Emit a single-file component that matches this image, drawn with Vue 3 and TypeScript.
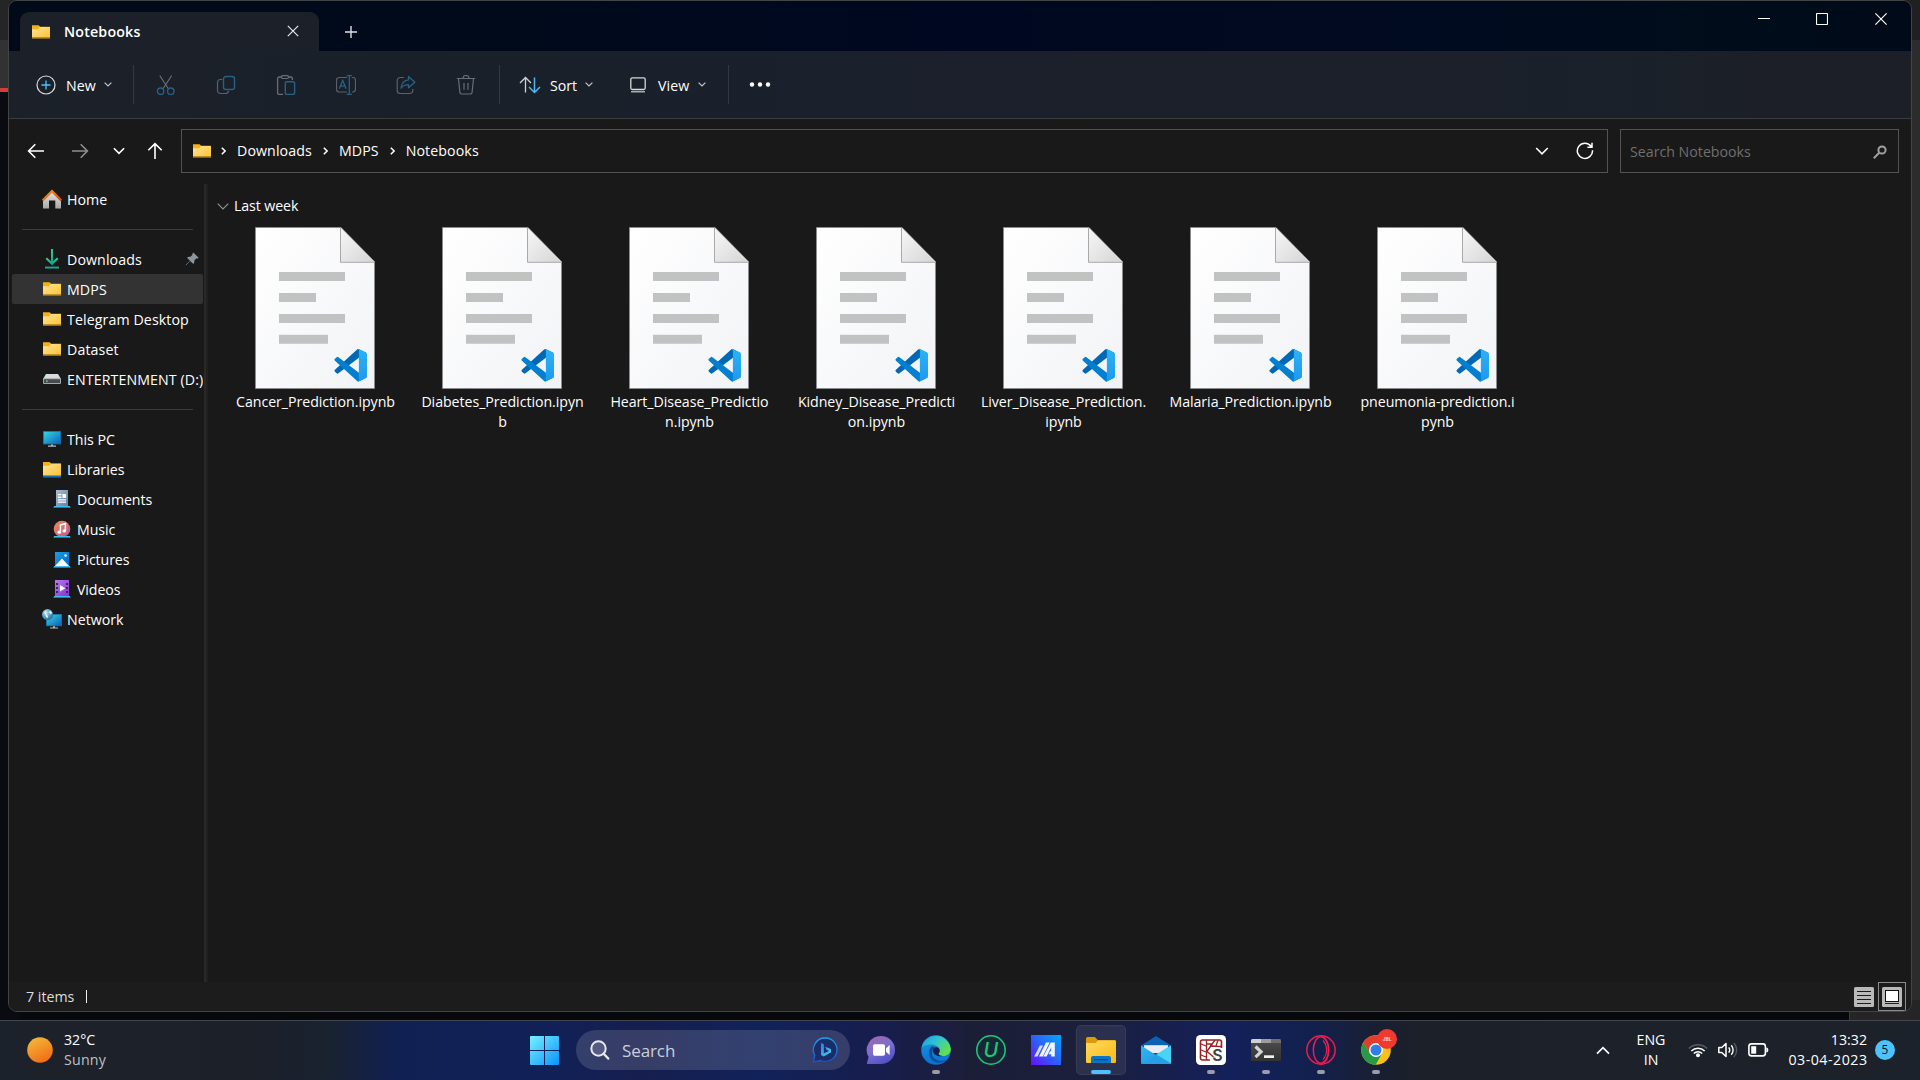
<script setup lang="ts">
interface NavItem {
  label: string
  icon: string
  nested?: boolean
  active?: boolean
  pinned?: boolean
}

const navGroups: NavItem[][] = [
  [{ label: 'Home', icon: 'home' }],
  [
    { label: 'Downloads', icon: 'download', pinned: true },
    { label: 'MDPS', icon: 'folder', active: true },
    { label: 'Telegram Desktop', icon: 'folder' },
    { label: 'Dataset', icon: 'folder' },
    { label: 'ENTERTENMENT (D:)', icon: 'drive' },
  ],
  [
    { label: 'This PC', icon: 'pc' },
    { label: 'Libraries', icon: 'library' },
    { label: 'Documents', icon: 'documents', nested: true },
    { label: 'Music', icon: 'music', nested: true },
    { label: 'Pictures', icon: 'pictures', nested: true },
    { label: 'Videos', icon: 'videos', nested: true },
    { label: 'Network', icon: 'network' },
  ],
]

const files: string[][] = [
  ['Cancer_Prediction.ipynb'],
  ['Diabetes_Prediction.ipyn', 'b'],
  ['Heart_Disease_Predictio', 'n.ipynb'],
  ['Kidney_Disease_Predicti', 'on.ipynb'],
  ['Liver_Disease_Prediction.', 'ipynb'],
  ['Malaria_Prediction.ipynb'],
  ['pneumonia-prediction.i', 'pynb'],
]

const crumbs: string[] = ['Downloads', 'MDPS', 'Notebooks']
const disabledTools: string[] = ['cut', 'copy', 'paste', 'rename', 'share', 'trash']

interface TaskApp {
  icon: string
  state: '' | 'running' | 'active'
  glyph?: string
}
const apps: TaskApp[] = [
  { icon: 'chat', state: '' },
  { icon: 'edge', state: 'running' },
  { icon: 'uninstaller', state: '', glyph: 'U' },
  { icon: 'myasus', state: '' },
  { icon: 'explorer', state: 'active' },
  { icon: 'mail', state: '' },
  { icon: 'ks', state: 'running', glyph: 'S' },
  { icon: 'terminal', state: 'running' },
  { icon: 'opera', state: 'running' },
  { icon: 'chrome', state: 'running', glyph: 'JBL' },
]
</script>

<template>
  <svg class="defs" width="0" height="0" aria-hidden="true">
    <defs>
      <linearGradient id="gFolder" x1="0" y1="0" x2="1" y2="1"><stop offset="0" stop-color="#ffe59b" /><stop offset="1" stop-color="#fdc232" /></linearGradient>
      <linearGradient id="gHome" x1="0" y1="0" x2="0" y2="1"><stop offset="0" stop-color="#e6e6e6" /><stop offset="1" stop-color="#a8a8a8" /></linearGradient>
      <linearGradient id="gRoof" x1="0" y1="0" x2="1" y2="1"><stop offset="0" stop-color="#f9a01b" /><stop offset="1" stop-color="#c8470f" /></linearGradient>
      <linearGradient id="gDown" x1="0" y1="0" x2="0" y2="1"><stop offset="0" stop-color="#3bd07f" /><stop offset="1" stop-color="#0ea5a0" /></linearGradient>
      <linearGradient id="gPc" x1="0" y1="0" x2="1" y2="1"><stop offset="0" stop-color="#35d6e6" /><stop offset="1" stop-color="#0b63b8" /></linearGradient>
      <linearGradient id="gDoc" x1="0" y1="0" x2="1" y2="1"><stop offset="0" stop-color="#a9bdd2" /><stop offset="1" stop-color="#5f7fa3" /></linearGradient>
      <linearGradient id="gMusic" x1="0" y1="0" x2="1" y2="1"><stop offset="0" stop-color="#f58a51" /><stop offset="1" stop-color="#b05a9c" /></linearGradient>
      <linearGradient id="gPic" x1="0" y1="0" x2="1" y2="1"><stop offset="0" stop-color="#1d9de6" /><stop offset="1" stop-color="#0866ba" /></linearGradient>
      <linearGradient id="gVid" x1="0" y1="0" x2="1" y2="1"><stop offset="0" stop-color="#b57bf0" /><stop offset="1" stop-color="#8233cf" /></linearGradient>
      <radialGradient id="gGlobe" cx=".35" cy=".3" r=".8"><stop offset="0" stop-color="#bfe4f2" /><stop offset=".6" stop-color="#4b95bd" /><stop offset="1" stop-color="#275f86" /></radialGradient>
      <linearGradient id="gPage" x1="0" y1="0" x2="1" y2="1"><stop offset="0" stop-color="#ffffff" /><stop offset="1" stop-color="#f2f3f6" /></linearGradient>
      <linearGradient id="gFold" x1="0" y1="0" x2="1" y2="1"><stop offset="0" stop-color="#f7f7f7" /><stop offset="1" stop-color="#d5d5d5" /></linearGradient>
      <linearGradient id="gCode" x1="0" y1="0" x2="0" y2="1"><stop offset="0" stop-color="#2bb3f5" /><stop offset="1" stop-color="#1f98ee" /></linearGradient>
      <linearGradient id="gWin" x1="0" y1="0" x2="1" y2="1"><stop offset="0" stop-color="#77f0ff" /><stop offset="1" stop-color="#0a93fb" /></linearGradient>
      <linearGradient id="gBing" x1="0" y1="0" x2="0" y2="1"><stop offset="0" stop-color="#1ea0e8" /><stop offset="1" stop-color="#2150c8" /></linearGradient>
      <linearGradient id="gBingB" x1="0" y1="0" x2="1" y2="1"><stop offset="0" stop-color="#2e7df0" /><stop offset="1" stop-color="#3fd8e8" /></linearGradient>
      <linearGradient id="gChat" x1=".1" y1="0" x2=".6" y2="1"><stop offset="0" stop-color="#a267a8" /><stop offset=".5" stop-color="#7a6fd0" /><stop offset="1" stop-color="#5350c4" /></linearGradient>
      <linearGradient id="gEdgeTop" x1="0" y1="0" x2="1" y2=".5"><stop offset="0" stop-color="#1a9fe0" /><stop offset=".5" stop-color="#30c3d2" /><stop offset="1" stop-color="#62e04c" /></linearGradient>
      <linearGradient id="gEdge" x1="0" y1="0" x2="0" y2="1"><stop offset="0" stop-color="#1b9be2" /><stop offset="1" stop-color="#0a6fd0" /></linearGradient>
      <linearGradient id="gAsus" x1="0" y1="1" x2="1" y2="0"><stop offset="0" stop-color="#6a0cfb" /><stop offset=".5" stop-color="#2c62fb" /><stop offset="1" stop-color="#00a8fc" /></linearGradient>
      <linearGradient id="gExpl" x1="0" y1="0" x2="1" y2="1"><stop offset="0" stop-color="#ffda62" /><stop offset="1" stop-color="#fab812" /></linearGradient>
      <linearGradient id="gMail" x1="0" y1="0" x2="1" y2="1"><stop offset="0" stop-color="#2fb8f3" /><stop offset="1" stop-color="#1e93dd" /></linearGradient>
      <linearGradient id="gTerm" x1="0" y1="0" x2="0" y2="1"><stop offset="0" stop-color="#4e4e4e" /><stop offset="1" stop-color="#333333" /></linearGradient>
      <linearGradient id="gSun" x1=".2" y1="0" x2=".7" y2="1"><stop offset="0" stop-color="#f3b93c" /><stop offset="1" stop-color="#f26a12" /></linearGradient>
    </defs>
    <symbol id="i-folder" viewBox="0 0 20 20"><path d="M1 3.200h6.600l1.600 1.600H19V9H1z" fill="#f9ae13" /><path d="M1 7.200h6L9 5h10v10.600H1z" fill="url(#gFolder)" /><path d="M1 15.400h18v1.200H1z" fill="#e5a320" /></symbol>
    <symbol id="i-library" viewBox="0 0 20 20"><path d="M1 3h6.600L9.200 4.400H19v5H1z" fill="#f9ae13" /><path d="M1 6.800h6l2-2h10v11.300H1z" fill="url(#gFolder)" /><path d="M1 16h18v1.600H1z" fill="#2bb1ee" /><path d="M1 17.400h18v1.200H1z" fill="#0871bd" /></symbol>
    <symbol id="i-home" viewBox="0 0 20 20"><path d="M1 19.500V10.500l9-8.500L19 10.500v9h-5.700v-8H7v8z" fill="url(#gHome)" /><path d="M.6 11.500 10 2.100l9.400 9.400" fill="none" stroke="url(#gRoof)" stroke-width="2.400" /></symbol>
    <symbol id="i-download" viewBox="0 0 20 20"><path d="M4.300 9.200l5.700 5.600 5.700-5.600" fill="none" stroke="url(#gDown)" stroke-width="2" /><path d="M9 0h2v14H9z" fill="url(#gDown)" /><path d="M3 17.600h14v1.900H3z" fill="#14ab92" /></symbol>
    <symbol id="i-drive" viewBox="0 0 20 20"><path d="M4 5h12l3 5H1z" fill="#d9dcdf" /><rect x="1" y="9.200" width="18" height="5.800" rx="1" fill="#a4a7ab" /><rect x="2" y="10.200" width="16" height="3.800" rx=".6" fill="#484b4e" /><rect x="4" y="11.400" width="1.600" height="1.600" fill="#3fe06a" /></symbol>
    <symbol id="i-pc" viewBox="0 0 20 20"><path d="M1 2h18v13.400H1z" fill="#136b9a" /><path d="M1.800 2.800h16.400v11.800H1.800z" fill="url(#gPc)" /><path d="M9 15.400h2v1.200h3v1.200H6v-1.200h3z" fill="#b5bac0" /></symbol>
    <symbol id="i-documents" viewBox="0 0 20 20"><path d="M4 1h12v16.500H4z" fill="url(#gDoc)" /><path d="M6 5h3.400v1.300H6zM6 7.600h3.400v1.300H6zM10.500 5h3.600v3.900h-3.600zM6 10.200h8v1.300H6zM6 12.500h8v1.200H6z" fill="#fff" /><path d="M2 17.300h16l.9 1.700H1.100z" fill="#0b7ccb" /><path d="M2 17h16v1H2z" fill="#40bdf3" /></symbol>
    <symbol id="i-music" viewBox="0 0 20 20"><circle cx="10" cy="10" r="8.300" fill="url(#gMusic)" /><ellipse cx="7.200" cy="13.200" rx="1.800" ry="1.600" fill="#fff" /><ellipse cx="12.200" cy="11.900" rx="1.800" ry="1.600" fill="#fff" /><path d="M8.400 13.300V6l5-1.400V12" fill="none" stroke="#fff" stroke-width="1.500" /><path d="M2 17.300h16l.9 1.700H1.100z" fill="#0b7ccb" /><path d="M2 17h16v1H2z" fill="#40bdf3" /></symbol>
    <symbol id="i-pictures" viewBox="0 0 20 20"><path d="M3 3h14v14.500H3z" fill="url(#gPic)" /><path d="m3 17 7-7.400L17 17z" fill="#fff" /><circle cx="13.600" cy="6.600" r="1.400" fill="#c9ebff" /><path d="M2 17.300h16l.9 1.700H1.100z" fill="#0b7ccb" /><path d="M2 17h16v1H2z" fill="#40bdf3" /></symbol>
    <symbol id="i-videos" viewBox="0 0 20 20"><path d="M3 1h14v16.500H3z" fill="url(#gVid)" /><path d="M4 4h2v2H4zM4 8h2v2H4zM4 12h2v2H4zM14 4h2v2h-2zM14 8h2v2h-2zM14 12h2v2h-2z" fill="#431a70" /><path d="m8 6 5.400 3.200L8 12.600z" fill="#fff" /><path d="M2 17.300h16l.9 1.700H1.100z" fill="#0b7ccb" /><path d="M2 17h16v1H2z" fill="#40bdf3" /></symbol>
    <symbol id="i-network" viewBox="0 0 20 20"><path d="M4 5h16v12.200H4z" fill="#136b9a" /><path d="M4.800 5.800h14.400v10.600H4.800z" fill="url(#gPc)" /><path d="M11 17.200h2v1.400h3v1H8v-1h3z" fill="#b5bac0" /><circle cx="5.600" cy="5.600" r="5.600" fill="url(#gGlobe)" /><path d="M2 3.600c1.800-2 3-1 2.600.6S7 6.600 5.600 9c-2-.4-1.600-2.900-3.600-5.400zm6-2 2 2-1 2-2-2z" fill="#dff4fb" /></symbol>

    <symbol id="i-cut" viewBox="0 0 20 20"><path d="m3.800.6 8.900 13.700M15.600.6 6.700 14.300" stroke="#686d76" stroke-width="1.100" fill="none" /><g fill="none" stroke="#296184" stroke-width="1.300"><circle cx="4.600" cy="16.200" r="3.200" /><circle cx="14.800" cy="16.200" r="3.200" /></g></symbol>
    <symbol id="i-copy" viewBox="0 0 20 20"><path d="M6.500 4.500H4.300a2.800 2.800 0 0 0-2.800 2.800v8.200a3 3 0 0 0 3 3h5.300a2.800 2.800 0 0 0 2.700-2.600" fill="none" stroke="#5b6069" stroke-width="1.200" /><rect x="7.500" y="1.500" width="11" height="13" rx="2.600" fill="none" stroke="#296184" stroke-width="1.400" /></symbol>
    <symbol id="i-paste" viewBox="0 0 20 20"><path d="M7 19.400H3.200a1.600 1.600 0 0 1-1.600-1.600V3.600A1.600 1.600 0 0 1 3.200 2H6m6 0h2.800a1.600 1.600 0 0 1 1.600 1.600V5" fill="none" stroke="#686d76" stroke-width="1.300" /><rect x="5.500" y=".7" width="7" height="2.800" rx="1.200" fill="none" stroke="#686d76" stroke-width="1.200" /><rect x="9.300" y="6.700" width="9.300" height="12.700" rx="1.600" fill="none" stroke="#296184" stroke-width="1.400" /></symbol>
    <symbol id="i-rename" viewBox="0 0 20 20"><path d="M11 17H3.200A2.700 2.700 0 0 1 .5 14.300V5.200a2.700 2.700 0 0 1 2.700-2.700H11m4.800 0h1a2.700 2.700 0 0 1 2.700 2.700v9.100a2.700 2.700 0 0 1-2.700 2.700h-1" fill="none" stroke="#5b6069" stroke-width="1.200" /><path d="m3.300 13.800 3.400-8.300 3.400 8.300M4.500 11.200h4.500M13.300.6v18.800M10.700.6h5.200M10.700 19.400h5.200" fill="none" stroke="#296184" stroke-width="1.300" /></symbol>
    <symbol id="i-share" viewBox="0 0 20 20"><path d="M8 2.500H4.200a3 3 0 0 0-3 3v10a3 3 0 0 0 3 3h9.600a3 3 0 0 0 3-3V14" fill="none" stroke="#5b6069" stroke-width="1.200" /><path d="M12.500 1.500 18.800 7.300l-6.300 5.500V9.600c-3.500 0-5.600 1-7.500 3.600.6-4.700 3-7.900 7.500-8.300z" fill="none" stroke="#296184" stroke-width="1.300" stroke-linejoin="round" /></symbol>
    <symbol id="i-trash" viewBox="0 0 20 20"><path d="M.8 3.500h18.400M7 3.300a3 2.800 0 0 1 6 0M2.500 3.700l1.400 13.600a2 2 0 0 0 2 1.700h8.200a2 2 0 0 0 2-1.700l1.400-13.600M8 8v6.800M12 8v6.800" fill="none" stroke="#686d76" stroke-width="1.200" /></symbol>

    <symbol id="t-chat" viewBox="0 0 30 30"><path d="M15 1a14 14 0 0 1 0 28H1.500a.6.600 0 0 1-.5-.9L2.600 22A14 14 0 0 1 15 1z" fill="url(#gChat)" /><rect x="7" y="9.300" width="12" height="11.400" rx="1.600" fill="#fff" /><path d="m20 13.400 3.600-3.300v9.800L20 16.700z" fill="#fff" /></symbol>
    <symbol id="t-edge" viewBox="0 0 30 30"><circle cx="15" cy="15" r="14.800" fill="url(#gEdge)" /><path d="M.6 13A14.800 14.800 0 0 1 29.800 14c0 4.600-3.800 7-7.500 7-2.900 0-4.800-.9-4.800-1.900 0-.8 1.300-1.300 1.300-3.600 0-3.500-3.700-6-8-6C5.800 9.500 2 11 .6 13z" fill="url(#gEdgeTop)" /><path d="M10.500 11.500c-3.500 3-3.400 9.500.3 13.200 3.800 3.700 10.400 4.600 15.500-.4-8 4.300-15.700-.9-15.200-6.400.2-2.200 1.700-3.900 3.400-4.600-1.500-1.900-2.800-2.300-4-1.800z" fill="#0c4f9c" /><path d="M12 15.600a3.400 3.400 0 0 1 6.500-1.400c.5 2-.3 3.300-.9 4.300-.5 1 1.200 2.400 4 2.500-5 1.400-9.600-1.400-9.600-5.400z" fill="#171f47" /></symbol>
    <symbol id="t-uninstaller" viewBox="0 0 30 30"><circle cx="15" cy="15" r="14.200" fill="#182937" fill-opacity=".8" stroke="#1fc774" stroke-width="1.600" /></symbol>
    <symbol id="t-myasus" viewBox="0 0 30 30"><path d="M0 0h30v30H0z" fill="url(#gAsus)" /><path d="M8.800 10.500h3.200L6.500 21.500H3.200z" fill="#cfdcff" /><path d="M15 7.500h3.600L11.800 21.500H8z" fill="#eef3ff" /><path d="M19.800 7.500H23.800v14h-3.600v-2.300h-2.600l1.500-3h1.100v-3.700l-4.600 9h-3.300z" fill="#f2f6ff" /></symbol>
    <symbol id="t-explorer" viewBox="0 0 30 30"><path d="M0 3.600A1.600 1.600 0 0 1 1.600 2h7.200l3 3H28.500A1.500 1.500 0 0 1 30 6.500V12H0z" fill="#dc9a08" /><path d="M0 8h9.500l2.700-2.500H29a1 1 0 0 1 1 1v20.300a1.200 1.200 0 0 1-1.200 1.200H1.200A1.200 1.200 0 0 1 0 26.800z" fill="url(#gExpl)" /><path d="M5 28v-5a2 2 0 0 1 2-2h16a2 2 0 0 1 2 2v5z" fill="#0c74c5" /><path d="M8 24.200h14v1H8z" fill="#07437f" /></symbol>
    <symbol id="t-mail" viewBox="0 0 30 30"><path d="M0 10.500 15 1l15 9.500V16H0z" fill="#0b62b4" /><path d="M3 10.200h24v8H3z" fill="#ececf0" /><path d="M0 10.500 15 20l15-9.500V28a1 1 0 0 1-1 1H1a1 1 0 0 1-1-1z" fill="url(#gMail)" /><path d="M30 10.500V28.500L15 19.500z" fill="#48d3f7" /><path d="M30 28.500 15 19.500 2 29h27z" fill="#269fe5" /></symbol>
    <symbol id="t-ks" viewBox="0 0 30 30"><rect width="30" height="30" rx="4.500" fill="#fff" /><g fill="none" stroke="#982226" stroke-width="1.600"><path d="M14 25H6.500a2 2 0 0 1-2-2V7a2 2 0 0 1 2-2h17a2 2 0 0 1 2 2v6" /><path d="M10.500 5v20M10.500 17 19 5M10.500 16l7 6M5 9l5 2M5 15l5 2M5 20l5 2M10.500 9h6M14 11l11 .5M20 11l2-6" stroke-width="1.300" /></g></symbol>
    <symbol id="t-terminal" viewBox="0 0 30 30"><rect y="4" width="30" height="22" rx="1.500" fill="url(#gTerm)" /><path d="M1.500 4H10v4H0V5.500A1.500 1.500 0 0 1 1.500 4z" fill="#d0d0d0" /><path d="M10 4h10v4H10z" fill="#9d9d9d" /><path d="M20 4h8.500A1.500 1.500 0 0 1 30 5.500V8H20z" fill="#6e6e6e" /><path d="m4.500 11.500 5.500 5.300-5.500 5.400" fill="none" stroke="#d4d4d4" stroke-width="3.200" /><path d="M13 20.300h10V23H13z" fill="#f2f2f2" /></symbol>
    <symbol id="t-opera" viewBox="0 0 30 30"><g fill="none" stroke="#ee1c4f"><circle cx="15" cy="15" r="14.200" stroke-width="1.500" /><ellipse cx="15" cy="15" rx="7.700" ry="13.200" stroke-width="1.500" /><path d="M15.500 1.800c9.500 2.500 9.500 23.900 0 26.400M17 5.500c4.800 5 4.800 14 0 19" stroke-width="1.200" /></g></symbol>
    <symbol id="t-chrome" viewBox="0 0 30 30"><circle cx="15" cy="15" r="14.800" fill="#fbc116" /><path d="M15 8.200h12.900A14.800 14.800 0 0 0 2.200 7.600L9.100 18.400z" fill="#e33b2e" /><path d="M2.200 7.600A14.800 14.800 0 0 0 14.700 29.800L21 18.400 9.100 18.400z" fill="#26994a" /><circle cx="15" cy="15" r="7" fill="#fff" /><circle cx="15" cy="15" r="5.500" fill="#2f7de9" /></symbol>
  </svg>

  <div class="desktop">
    <div class="edge left"><i class="e1"></i><i class="e2"></i><i class="e3"></i></div>
    <div class="edge right"><i class="e1"></i></div>
    <div class="gapcorner"></div>

    <section class="window">
      <header class="titlebar">
        <div class="tab">
          <svg class="ic20"><use href="#i-folder" /></svg>
          <span class="tabname">Notebooks</span>
          <svg class="tabclose" width="12" height="12" viewBox="0 0 12 12"><path d="M.8.800l10.400 10.400M11.200.8.800 11.200" /></svg>
        </div>
        <svg class="newtab" width="14" height="14" viewBox="0 0 14 14"><path d="M7 1v12M1 7h12" /></svg>
        <div class="caption">
          <svg class="min" width="12" height="12" viewBox="0 0 12 12"><path d="M0 5.500h12" /></svg>
          <svg width="12" height="12" viewBox="0 0 12 12"><rect x=".5" y=".5" width="11" height="11" rx=".8" /></svg>
          <svg width="12" height="12" viewBox="0 0 12 12"><path d="m.4.400 11.200 11.200M11.600.4.400 11.600" /></svg>
        </div>
      </header>

      <div class="toolbar">
        <div class="cmd new">
          <svg width="20" height="20" viewBox="0 0 20 20"><circle cx="10" cy="10" r="9" fill="none" stroke="#dcdde0" stroke-width="1.200" /><path d="M10 5.500v9M5.500 10h9" stroke="#4cc2ff" stroke-width="1.300" /></svg>
          <span>New</span>
          <svg class="chev" width="8" height="5" viewBox="0 0 8 5"><path d="m.6.600 3.400 3.400L7.400.6" /></svg>
        </div>
        <i class="sep"></i>
        <div class="tools">
          <span v-for="t in disabledTools" :key="t" class="tool"><svg class="ic20"><use :href="'#i-' + t" /></svg></span>
        </div>
        <i class="sep"></i>
        <div class="cmd sort">
          <svg width="22" height="18" viewBox="0 0 22 18"><path d="M6.500 16.500V1.500M1 7l5.500-5.500L12 7" fill="none" stroke="#cfd1d5" stroke-width="1.300" /><path d="M15.500 1.500v15M10 11l5.500 5.500L21 11" fill="none" stroke="#4cb9f5" stroke-width="1.500" /></svg>
          <span>Sort</span>
          <svg class="chev" width="8" height="5" viewBox="0 0 8 5"><path d="m.6.600 3.400 3.400L7.400.6" /></svg>
        </div>
        <div class="cmd view">
          <svg width="16" height="16" viewBox="0 0 16 16"><rect x=".8" y=".8" width="14.400" height="11.700" rx="1.500" fill="none" stroke="#d8d9d6" stroke-width="1.300" /><path d="M1 14.700h14" stroke="#a9aaa8" stroke-width="1.500" /></svg>
          <span>View</span>
          <svg class="chev" width="8" height="5" viewBox="0 0 8 5"><path d="m.6.600 3.400 3.400L7.400.6" /></svg>
        </div>
        <i class="sep"></i>
        <svg class="more" width="22" height="5" viewBox="0 0 22 5"><circle cx="3" cy="2.500" r="2.200" /><circle cx="11" cy="2.500" r="2.200" /><circle cx="19" cy="2.500" r="2.200" /></svg>
      </div>

      <div class="navrow">
        <div class="arrows">
          <svg width="18" height="16" viewBox="0 0 18 16"><path d="M17 8H1.800M8.300 1.300 1.600 8l6.700 6.700" /></svg>
          <svg class="dim" width="18" height="16" viewBox="0 0 18 16"><path d="M1 8h15.200M9.700 1.300 16.400 8l-6.700 6.700" /></svg>
          <svg width="12" height="8" viewBox="0 0 12 8"><path d="m.9 1.200 5.100 5.100 5.100-5.100" /></svg>
          <svg width="16" height="18" viewBox="0 0 16 18"><path d="M8 17V1.800M1.300 8.300 8 1.600l6.700 6.700" /></svg>
        </div>
        <div class="address">
          <svg class="ic20"><use href="#i-folder" /></svg>
          <template v-for="c in crumbs" :key="c">
            <svg class="crumbchev" width="5" height="8" viewBox="0 0 5 8"><path d="m.8.700 3.300 3.300-3.300 3.300" /></svg>
            <span class="crumb">{{ c }}</span>
          </template>
          <svg class="drop" width="14" height="8" viewBox="0 0 14 8"><path d="m1.200 1 5.800 5.800L12.800 1" /></svg>
          <svg class="reload" width="18" height="18" viewBox="0 0 18 18"><path d="M15.200 4.500A7.600 7.600 0 1 0 16.500 8.200M16 .8v4.400h-4.600" /></svg>
        </div>
        <div class="search">
          <span>Search Notebooks</span>
          <svg width="14" height="14" viewBox="0 0 14 14"><circle cx="9" cy="5" r="3.600" stroke-width="2" /><path d="M6.200 7.800.8 13.200" stroke-width="2" /></svg>
        </div>
      </div>

      <div class="body">
        <nav class="sidebar">
          <template v-for="(group, gi) in navGroups" :key="gi">
            <div v-if="gi > 0" class="rule"><i></i></div>
            <div v-for="item in group" :key="item.label" class="navitem" :class="[item.icon, { nested: item.nested, active: item.active }]">
              <svg class="ic20"><use :href="'#i-' + item.icon" /></svg>
              <span>{{ item.label }}</span>
              <svg v-if="item.pinned" class="pin" width="14" height="14" viewBox="0 0 14 14"><path d="M8.300.4 13.600 5.700c-.8 1-1.700 1-2.400.8L9.300 8.500c.3 1.400 0 2.500-1 3.400L5.200 8.900 1.300 13 .6 13.400 1 12.600l4-3.900-3-3c1-1 2.100-1.200 3.500-.9l1.900-2C7.200 2 7.400 1.200 8.300.4z" /></svg>
            </div>
          </template>
        </nav>
        <i class="splitter"></i>
        <main class="content">
          <div class="grouphead">
            <svg width="12" height="7" viewBox="0 0 12 7"><path d="m.7.700 5.300 5.300L11.300.7" /></svg>
            <span>Last week</span>
          </div>
          <div class="files">
            <figure v-for="f in files" :key="f[0]" class="file">
              <svg class="page" width="120" height="162" viewBox="0 0 120 162">
                <path d="M.5.500H86L119.500 34.500V161.500H.5z" fill="url(#gPage)" stroke="#8b8d8f" stroke-width=".8" />
                <path d="M85.500.8V35.200H119.400z" fill="url(#gFold)" />
                <path d="M85.500.8V35.300H119.400" fill="none" stroke="#a9a9a9" stroke-width="1" />
                <path d="M24 45h66v9H24zM24 66h37v9H24zM24 87h66v9H24zM24 107.800h49v9H24z" fill="#c1c3c3" />
                <g transform="translate(79.500 122) scale(.325)">
                  <path d="M96.461 10.796 75.857.876A6.230 6.230 0 0 0 68.750 2.083L1.299 63.583a4.167 4.167 0 0 0 .004 6.162l5.510 5.009a4.167 4.167 0 0 0 5.320.236L93.361 13.370c2.725-2.067 6.639-.124 6.639 3.297v-.24a6.250 6.250 0 0 0-3.539-5.632z" fill="#0068b4" />
                  <path d="M96.461 89.204 75.857 99.124a6.229 6.229 0 0 1-7.107-1.207l-67.451-61.500a4.167 4.167 0 0 1 .004-6.162l5.510-5.009a4.167 4.167 0 0 1 5.320-.236l81.228 61.620c2.725 2.068 6.639.124 6.639-3.297v.24a6.250 6.250 0 0 1-3.539 5.630z" fill="#0280cf" />
                  <path d="M75.858 99.126a6.232 6.232 0 0 1-7.108-1.210c2.306 2.307 6.250.674 6.250-2.588V4.672c0-3.262-3.944-4.895-6.250-2.589a6.232 6.232 0 0 1 7.108-1.210l20.600 9.908A6.250 6.250 0 0 1 100 16.413v67.174a6.250 6.250 0 0 1-3.541 5.633l-20.601 9.906z" fill="url(#gCode)" />
                </g>
              </svg>
              <figcaption><div v-for="line in f" :key="line">{{ line }}</div></figcaption>
            </figure>
          </div>
        </main>
      </div>

      <footer class="status">
        <span>7 items</span><i></i>
        <div class="modes">
          <div class="mode"><svg width="20" height="20" viewBox="0 0 20 20"><rect width="20" height="20" rx="1.500" fill="#b9b9b9" /><path d="M3 4.500h14M3 8.500h14M3 12.500h14M3 16.500h14" stroke="#1a1a1a" /></svg></div>
          <div class="mode on"><svg width="20" height="20" viewBox="0 0 20 20"><rect width="20" height="20" rx="1.500" fill="#b9b9b9" /><rect x="3.500" y="3.500" width="13" height="11" fill="#fff" stroke="#111" /><path d="M3 16.500h14" stroke="#222" /></svg></div>
        </div>
      </footer>
    </section>

    <div class="taskbar">
      <div class="weather">
        <svg width="26" height="26" viewBox="0 0 26 26"><circle cx="13" cy="13" r="12.800" fill="url(#gSun)" /></svg>
        <div><div>32°C</div><div class="soft">Sunny</div></div>
      </div>
      <div class="center">
        <svg class="start" width="29" height="29" viewBox="0 0 29 29"><path d="M1 0h13v14H0V1a1 1 0 0 1 1-1zM15 0h13a1 1 0 0 1 1 1v13H15zM0 15h14v14H1a1 1 0 0 1-1-1zM15 15h14v13a1 1 0 0 1-1 1H15z" fill="url(#gWin)" /></svg>
        <div class="pill">
          <svg width="20" height="20" viewBox="0 0 20 20"><circle cx="8.500" cy="8.500" r="7.200" fill="#8f93ae" fill-opacity=".35" stroke="#e8e9ef" stroke-width="2" /><path d="m13.700 13.700 4.500 4.800" stroke="#e8e9ef" stroke-width="2.400" stroke-linecap="round" /></svg>
          <span>Search</span>
          <svg class="bing" width="26" height="26" viewBox="0 0 26 26"><path d="M13.500 1a11.700 11.700 0 1 1-4.700 22.500L1.500 25 2.800 18.300A11.700 11.700 0 0 1 13.500 1z" fill="#1b2c66" stroke="url(#gBing)" stroke-width="1.300" /><path d="m9 6 2.800 1.200v9.100L17 14l-2.600-1.400-1.200-2.800 5.800 2.200v3.200L11.800 19.500 9 18z" fill="url(#gBingB)" /></svg>
        </div>
        <div class="apps">
          <div v-for="a in apps" :key="a.icon" class="app" :class="[a.state, a.icon]">
            <svg width="30" height="30"><use :href="'#t-' + a.icon" /></svg>
            <span v-if="a.glyph" class="glyph">{{ a.glyph }}</span>
            <i v-if="a.state" class="ind"></i>
          </div>
        </div>
      </div>
      <div class="tray">
        <svg class="up" width="14" height="9" viewBox="0 0 14 9"><path d="m1 7.600 6-6 6 6" fill="none" stroke="#fff" stroke-width="1.700" /></svg>
        <div class="lang"><div>ENG</div><div>IN</div></div>
        <svg class="wifi" width="20" height="16" viewBox="0 0 20 16"><g fill="none"><path d="M.8 6.500a13 13 0 0 1 18.400 0" stroke="#555a63" stroke-width="1.500" /><path d="M3.300 9a9.500 9.500 0 0 1 13.400 0M5.800 11.500a6 6 0 0 1 8.400 0" stroke="#fff" stroke-width="1.500" /></g><circle cx="10" cy="13.300" r="2" fill="#fff" /></svg>
        <svg class="vol" width="20" height="16" viewBox="0 0 20 16"><path d="M.8 5.500h3L8 1.500v13L3.800 10.500h-3z" fill="none" stroke="#fff" stroke-width="1.500" stroke-linejoin="round" /><path d="M10.700 5.400a4 4 0 0 1 0 5.200M13.200 3.200a7 7 0 0 1 0 9.600" fill="none" stroke="#fff" stroke-width="1.400" /><path d="M15.800 1a10 10 0 0 1 0 14" fill="none" stroke="#555a63" stroke-width="1.400" /></svg>
        <svg class="bat" width="21" height="14" viewBox="0 0 21 14"><rect x=".9" y=".9" width="16.500" height="12" rx="2.600" fill="none" stroke="#fff" stroke-width="1.600" /><rect x="3.200" y="3.200" width="5" height="7.500" fill="#fff" /><path d="M18.300 4.500c1.500 0 2 1 2 2.400s-.5 2.400-2 2.400z" fill="#fff" /></svg>
        <div class="clock"><div>13:32</div><div class="date">03-04-2023</div></div>
        <span class="count">5</span>
      </div>
    </div>
  </div>
</template>

<style>
html, body { margin: 0; background: #06070b; overflow: hidden; }
</style>

<style scoped>
* { box-sizing: border-box; }
svg { display: block; flex: none; }
.defs { position: absolute; }
.ic20 { width: 20px; height: 20px; }
.desktop {
  position: relative; width: 1920px; height: 1080px; overflow: hidden;
  display: flex; flex-direction: column; background: #07080c;
  font-family: "Open Sans", "Noto Sans", sans-serif; font-size: 14.200px; color: #fff; line-height: 20px;
}
.edge { position: absolute; top: 0; display: flex; flex-direction: column; }
.edge.left { left: 0; width: 20px; height: 1020px; background: #090b11; }
.edge.right { right: 0; width: 20px; height: 1020px; background: #2c2c2c; }
.left .e1 { height: 40px; background: #252525; }
.left .e2 { height: 48px; background: #323232; }
.left .e3 { height: 4px; background: #d43c3c; }
.right .e1 { height: 40px; background: #202020; }
.gapcorner { position: absolute; left: 1849px; top: 1000px; width: 71px; height: 20px; background: #252525; border-left: 1px solid #3b3b3b; }

.window {
  position: relative; margin: 0 8px; width: 1904px; height: 1012px; flex: none;
  border: 1px solid #434445; border-radius: 9px; background: #191919; overflow: hidden;
  display: flex; flex-direction: column;
}
.titlebar {
  height: 50px; flex: none; display: flex; align-items: flex-start;
  background: linear-gradient(90deg, #000a19 0, #000a1c 30%, #000821 48%, #000a20 75%, #000d1b 88%, #000a18 100%);
}
.tab {
  width: 299px; height: 39px; margin: 11px 0 0 11px; padding: 0 20px 0 11px; background: #1c2129;
  border-radius: 9px 9px 0 0; display: flex; align-items: center;
}
.tabname { font-weight: 600; margin-left: 13px; letter-spacing: .2px; }
.tabclose { margin-left: auto; margin-bottom: 1px; stroke: #e8e8ea; stroke-width: 1.200; }
.newtab { margin: 24px 0 0 25px; stroke: #e0e2e5; stroke-width: 1.400; }
.caption { margin-left: auto; padding: 12px 24px 0 0; display: flex; gap: 47px; fill: none; stroke: #fff; stroke-width: 1.150; }
.caption .min { margin-right: -1px; }
.toolbar {
  height: 68px; flex: none; display: flex; align-items: center; border-bottom: 1px solid #3b3c40;
  background: linear-gradient(90deg, #1c2129 0, #1a202a 20%, #1b202c 50%, #1b202b 78%, #1a212a 84%, #1c1f28 92%, #1c1f27 100%);
}
.cmd { display: flex; align-items: center; height: 34px; }
.chev { fill: none; stroke: #bfc2c8; stroke-width: 1.200; }
.new { width: 124px; padding-left: 26.500px; }
.new span { margin: 2px 8px 0 10.500px; }
.sep { width: 1px; height: 39px; background: #34383f; flex: none; }
.tools { display: flex; width: 365px; padding-left: 2px; }
.tool { width: 60px; display: flex; justify-content: center; }
.sort { width: 119px; padding-left: 19px; }
.sort span { margin: 2px 8px 0 9px; }
.view { width: 109px; padding-left: 11px; }
.view span { margin: 2px 9px 0 12px; letter-spacing: .1px; }
.more { margin-left: 20px; fill: #fff; }

.navrow { height: 65px; flex: none; display: flex; padding-top: 10px; }
.arrows { width: 172px; height: 44px; padding-left: 18px; display: flex; align-items: center; fill: none; stroke: #fff; stroke-width: 1.600; }
.arrows svg:nth-child(2) { margin-left: 26px; }
.arrows svg:nth-child(3) { margin-left: 24px; }
.arrows svg:nth-child(4) { margin-left: 22px; }
.arrows .dim { stroke: #8f8f8f; }
.address { width: 1427px; height: 44px; border: 1px solid #535353; display: flex; align-items: center; padding: 0 13px 0 10px; }
.crumbchev { margin: 0 11px 0 9px; fill: none; stroke: #fff; stroke-width: 1.500; }
.crumb + .crumbchev { margin-left: 11px; }
.crumb { letter-spacing: .1px; }
.drop { margin-left: auto; fill: none; stroke: #fff; stroke-width: 1.600; }
.reload { margin-left: 27px; fill: none; stroke: #fff; stroke-width: 1.500; }
.search { width: 279px; height: 44px; margin-left: 12px; border: 1px solid #535353; display: flex; align-items: center; justify-content: space-between; padding: 1px 11px 0 9px; color: #6f6f6f; }
.search svg { fill: none; stroke: #a0a0a0; }

.body { flex: 1; display: flex; min-height: 0; }
.sidebar { width: 194px; padding-left: 3px; overflow: hidden; }
.navitem { height: 30px; width: 191px; display: flex; align-items: center; padding-left: 30px; white-space: nowrap; overflow: hidden; }
.navitem span { margin: 2px 0 0 5px; }
.navitem.download span, .navitem.folder span, .navitem.drive span { letter-spacing: .1px; }
.navitem.nested { padding-left: 40px; }
.navitem.nested span { letter-spacing: -.1px; }
.navitem.active { background: #333333; border-radius: 2px; }
.pin { margin-left: auto; margin-right: 4px; fill: #8d969e; }
.rule { height: 30px; display: flex; align-items: center; padding: 1px 0 0 10px; }
.rule i { width: 171px; height: 1px; background: #3c3c3c; }
.splitter { width: 4px; background: #202020; border-left: 2px solid #292929; margin-left: 1px; }
.content { flex: 1; padding-left: 8px; }
.grouphead { height: 20px; margin-top: 12px; padding-left: 1px; display: flex; align-items: center; }
.grouphead svg { fill: none; stroke: #8f8f8f; stroke-width: 1.200; }
.grouphead span { margin-left: 5px; letter-spacing: -.1px; }
.files { display: flex; margin: 11px 0 0 5px; }
.file { width: 187px; margin: 0; display: flex; flex-direction: column; align-items: center; }
figcaption { text-align: center; margin: 3px -1px 0 0; white-space: nowrap; letter-spacing: -.05px; transform: translateX(.5px); }
.status { height: 29px; flex: none; background: #1c1c1c; display: flex; align-items: center; padding-left: 17px; color: #dedede; }
.status > i { width: 1px; height: 13px; background: #f0f0f0; margin-left: 12px; }
.modes { margin-left: auto; display: flex; padding-right: 5px; }
.mode { width: 28px; height: 29px; display: flex; align-items: center; justify-content: center; }
.mode.on { border: 1px solid #8c8c8c; }

.taskbar {
  position: relative; margin-top: 8px; height: 60px; padding-bottom: 1px; flex: none; display: flex; align-items: center; border-top: 1px solid #42464f;
  background: linear-gradient(90deg, #1c222b 0, #1c2029 250px, #192230 330px, #102052 395px, #112158 540px, #161e4e 640px, #11225a 760px, #171d4d 880px, #1c1e38 970px, #1b1f3b 1080px, #14205a 1230px, #12204f 1310px, #191f33 1375px, #1c2029 1420px, #1c222b 1920px);
}
.weather { display: flex; align-items: center; width: 530px; padding-left: 27px; }
.weather > div { margin: -1px 0 0 11px; }
.soft { color: #bfc0c3; letter-spacing: .2px; }
.center { display: flex; align-items: center; width: 1066px; }
.pill { width: 274px; height: 40px; margin-left: 17px; border-radius: 20px; background: rgba(255, 255, 255, .14); display: flex; align-items: center; padding: 0 12px 0 14px; }
.pill span { font-size: 17px; color: #cccfdb; margin: 2px 0 0 12px; letter-spacing: -.1px; }
.bing { margin-left: auto; }
.apps { display: flex; margin-left: 6px; gap: 5px; }
.app { position: relative; width: 50px; height: 50px; border-radius: 5px; display: flex; align-items: center; justify-content: center; }
.app.active { background: rgba(255, 255, 255, .08); box-shadow: inset 0 0 0 1px rgba(255, 255, 255, .06); }
.ind { position: absolute; bottom: 1px; width: 8px; height: 4px; border-radius: 2px; background: #9a9cab; }
.app.active .ind { width: 20px; background: #4cc2ff; }
.glyph { position: absolute; text-align: center; font-family: Inter, sans-serif; }
.uninstaller .glyph { left: 10px; top: 10px; width: 30px; line-height: 30px; font-size: 20px; font-style: italic; font-weight: 500; color: #1fc774; }
.ks .glyph { left: 24px; top: 20px; width: 15px; line-height: 20px; font-size: 16px; font-weight: 600; color: #3b4044; }
.chrome .glyph { left: 26px; top: 4px; width: 20px; height: 20px; border-radius: 50%; background: #f03a30; font-size: 5px; font-weight: 700; line-height: 20px; color: #ffd5d0; }
.tray { display: flex; align-items: center; flex: 1; }
.lang { width: 40px; text-align: center; margin-left: 21px; }
.wifi { margin-left: 17px; margin-top: -1px; }
.vol { margin-left: 10px; }
.bat { margin-left: 10px; }
.clock { width: 98px; text-align: right; margin-top: -1px; }
.date { letter-spacing: .5px; margin-right: -.500px; white-space: nowrap; }
.count { width: 20px; height: 20px; margin-left: 8px; border-radius: 50%; background: #4cc2ff; color: #111; font-size: 12px; line-height: 20px; text-align: center; }
</style>
